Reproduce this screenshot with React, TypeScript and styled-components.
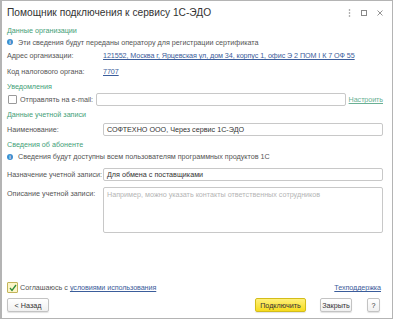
import styled, { createGlobalStyle } from "styled-components";

const GlobalStyle = createGlobalStyle`
  html, body { margin: 0; padding: 0; background: #fff; }
  body { font-family: "Liberation Sans", Arial, sans-serif; color: #4d4d4d; }
`;

const Window = styled.div`
  box-sizing: border-box;
  width: 393px;
  height: 319px;
  border: 1px solid #b4b4b4;
  border-left-width: 2px;
  background: #fff;
  display: flex;
  flex-direction: column;
  padding: 0 9px 6px 5px;
`;

const TitleBar = styled.div`
  display: flex;
  align-items: center;
  height: 23px;
`;

const Title = styled.div`
  flex: 1;
  font-size: 10.2px;
  color: #333;
  white-space: nowrap;
`;

const WinButtons = styled.div`
  display: flex;
  align-items: center;
  gap: 10px;
`;

const Content = styled.div`
  flex: 1;
  display: flex;
  flex-direction: column;
  font-size: 7.2px;
`;

const Section = styled.div<{ $h: number }>`
  color: #44a078;
  height: ${({ $h }) => $h}px;
  display: flex;
  align-items: center;
`;

const InfoRow = styled.div<{ $h: number }>`
  display: flex;
  align-items: center;
  gap: 5px;
  height: ${({ $h }) => $h}px;
  color: #555;
`;

const InfoIcon = styled.span`
  width: 6px;
  height: 6px;
  border-radius: 50%;
  background: #3c8fd0;
  color: #fff;
  font-size: 5px;
  font-weight: bold;
  display: inline-flex;
  align-items: center;
  justify-content: center;
`;

const Row = styled.div<{ $h: number; $top?: boolean }>`
  display: flex;
  align-items: ${({ $top }) => ($top ? "flex-start" : "center")};
  height: ${({ $h }) => $h}px;
`;

const Label = styled.div`
  width: 96px;
  flex: none;
  color: #555;
  white-space: nowrap;
`;

const Link = styled.a<{ $pale?: boolean }>`
  color: ${({ $pale }) => ($pale ? "#6ab094" : "#3b5d9b")};
  text-decoration: underline;
  white-space: nowrap;
  letter-spacing: -0.08px;
  cursor: pointer;
`;

const Input = styled.div`
  box-sizing: border-box;
  flex: 1;
  height: 13px;
  border: 1px solid #c8c8c8;
  border-radius: 2px;
  padding: 0 3px;
  display: flex;
  align-items: center;
  color: #333;
  white-space: nowrap;
  overflow: hidden;
`;

const TextArea = styled(Input)`
  height: 46px;
  align-items: flex-start;
  padding-top: 2px;
  color: #b5b5b5;
`;

const Check = styled.span<{ $on?: boolean }>`
  box-sizing: border-box;
  width: ${({ $on }) => ($on ? 11 : 9)}px;
  height: ${({ $on }) => ($on ? 11 : 9)}px;
  border: 1px solid ${({ $on }) => ($on ? "#c2b45a" : "#9a9a9a")};
  border-radius: 1px;
  margin: ${({ $on }) => ($on ? "0 2px 0 0" : "0 3px 0 1px")};
  flex: none;
  display: inline-flex;
  align-items: center;
  justify-content: center;
  background: ${({ $on }) => ($on ? "#fdf6c8" : "#fff")};
`;

const EmailLabel = styled.span`
  flex: none;
  margin-right: 3px;
  color: #555;
  white-space: nowrap;
`;

const Spacer = styled.div`
  flex: 1;
`;

const AgreeRow = styled.div`
  display: flex;
  align-items: center;
  height: 13px;
  color: #555;
`;

const Buttons = styled.div`
  display: flex;
  align-items: center;
  margin-top: 4px;
`;

const Button = styled.div<{ $primary?: boolean; $w: number; $gap?: number }>`
  box-sizing: border-box;
  width: ${({ $w }) => $w}px;
  height: 14px;
  margin-left: ${({ $gap }) => $gap ?? 0}px;
  border: 1px solid ${({ $primary }) => ($primary ? "#d3bd1a" : "#c3c3c3")};
  border-radius: 2px;
  background: ${({ $primary }) =>
    $primary ? "linear-gradient(#fff07a, #f7dc1e)" : "linear-gradient(#fff, #f0f0f0)"};
  color: #333;
  display: flex;
  align-items: center;
  justify-content: center;
  box-shadow: 0 1px 1px rgba(0, 0, 0, 0.12);
`;

export default function App() {
  return (
    <>
      <GlobalStyle />
      <Window>
        <TitleBar>
          <Title>Помощник подключения к сервису 1С-ЭДО</Title>
          <WinButtons>
            <svg width="3" height="8" viewBox="0 0 3 8">
              <circle cx="1.5" cy="1" r="0.8" fill="#888" />
              <circle cx="1.5" cy="4" r="0.8" fill="#888" />
              <circle cx="1.5" cy="7" r="0.8" fill="#888" />
            </svg>
            <svg width="6" height="6" viewBox="0 0 6 6">
              <rect x="0.5" y="0.5" width="5" height="5" fill="none" stroke="#888" />
            </svg>
            <svg width="6" height="6" viewBox="0 0 6 6">
              <path d="M0.5 0.5 L5.5 5.5 M5.5 0.5 L0.5 5.5" stroke="#888" strokeWidth="0.9" />
            </svg>
          </WinButtons>
        </TitleBar>
        <Content>
          <Section $h={12}>Данные организации</Section>
          <InfoRow $h={12}>
            <InfoIcon>i</InfoIcon>
            Эти сведения будут переданы оператору для регистрации сертификата
          </InfoRow>
          <Row $h={15}>
            <Label>Адрес организации:</Label>
            <Link>121552, Москва г, Ярцевская ул, дом 34, корпус 1, офис Э 2 ПОМ I К 7 ОФ 55</Link>
          </Row>
          <Row $h={16}>
            <Label>Код налогового органа:</Label>
            <Link>7707</Link>
          </Row>
          <Section $h={14}>Уведомления</Section>
          <Row $h={13}>
            <Check />
            <EmailLabel>Отправлять на e-mail:</EmailLabel>
            <Input />
            <Link $pale style={{ marginLeft: 3 }}>Настроить</Link>
          </Row>
          <Section $h={16}>Данные учетной записи</Section>
          <Row $h={14}>
            <Label>Наименование:</Label>
            <Input>СОФТЕХНО ООО, Через сервис 1С-ЭДО</Input>
          </Row>
          <Section $h={16}>Сведения об абоненте</Section>
          <InfoRow $h={9}>
            <InfoIcon>i</InfoIcon>
            Сведения будут доступны всем пользователям программных продуктов 1С
          </InfoRow>
          <Row $h={19} style={{ paddingTop: 4 }}>
            <Label>Назначение учетной записи:</Label>
            <Input>Для обмена с поставщиками</Input>
          </Row>
          <Row $h={46} $top style={{ marginTop: 3 }}>
            <Label style={{ paddingTop: 2 }}>Описание учетной записи:</Label>
            <TextArea>Например, можно указать контакты ответственных сотрудников</TextArea>
          </Row>
          <Spacer />
          <AgreeRow>
            <Check $on>
              <svg width="8" height="8" viewBox="0 0 8 8">
                <path d="M1 4 L3 6.5 L7 1" fill="none" stroke="#2e8b3a" strokeWidth="1.3" />
              </svg>
            </Check>
            Соглашаюсь с&nbsp;<Link>условиями использования</Link>
            <Spacer />
            <Link style={{ marginRight: 2 }}>Техподдержка</Link>
          </AgreeRow>
          <Buttons>
            <Button $w={42}>&lt; Назад</Button>
            <Spacer />
            <Button $primary $w={51}>Подключить</Button>
            <Button $w={32} $gap={14}>Закрыть</Button>
            <Button $w={13} $gap={15}>?</Button>
            <div style={{ width: 3 }} />
          </Buttons>
        </Content>
      </Window>
    </>
  );
}
